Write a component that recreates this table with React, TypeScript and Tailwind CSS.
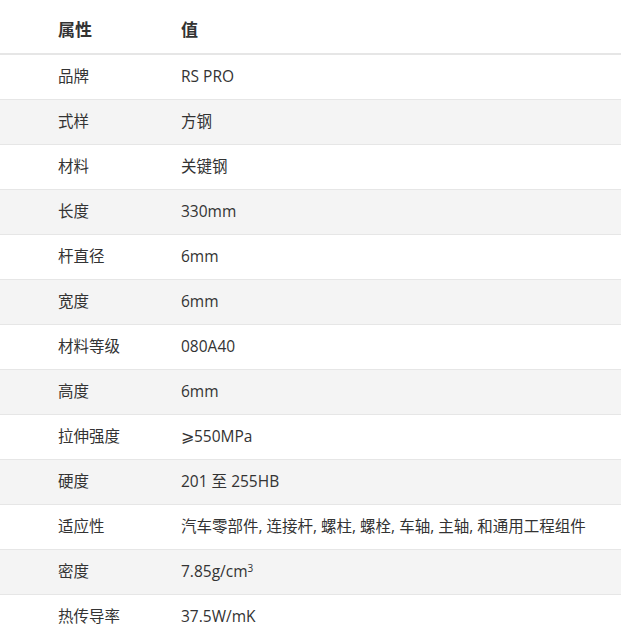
const rows: [string, React.ReactNode][] = [
  ["品牌", "RS PRO"],
  ["式样", "方钢"],
  ["材料", "关键钢"],
  ["长度", "330mm"],
  ["杆直径", "6mm"],
  ["宽度", "6mm"],
  ["材料等级", "080A40"],
  ["高度", "6mm"],
  ["拉伸强度", "⩾550MPa"],
  ["硬度", "201 至 255HB"],
  ["适应性", "汽车零部件, 连接杆, 螺柱, 螺栓, 车轴, 主轴, 和通用工程组件"],
  [
    "密度",
    <>
      7.85g/cm<sup className="text-[10px]">3</sup>
    </>,
  ],
  ["热传导率", "37.5W/mK"],
];

export default function App() {
  return (
    <div className="h-[638px] overflow-hidden bg-white font-['Open_Sans','Noto_Sans_CJK_SC',sans-serif] text-[#333]">
      <table className="w-full border-collapse text-left">
        <thead>
          <tr className="h-[54px] border-b-2 border-[#e6e6e6]">
            <th className="w-[181px] pl-[58px] pt-[7px] text-[17px] font-bold">属性</th>
            <th className="pt-[7px] text-[17px] font-bold">值</th>
          </tr>
        </thead>
        <tbody>
          {rows.map(([k, v], i) => (
            <tr
              key={k}
              className={`h-[45px] border-b border-[#e6e6e6] text-[15.5px] ${
                i % 2 === 1 ? "bg-[#f4f4f4]" : "bg-white"
              }`}
            >
              <td className="pl-[58px]">{k}</td>
              <td>{v}</td>
            </tr>
          ))}
        </tbody>
      </table>
    </div>
  );
}
